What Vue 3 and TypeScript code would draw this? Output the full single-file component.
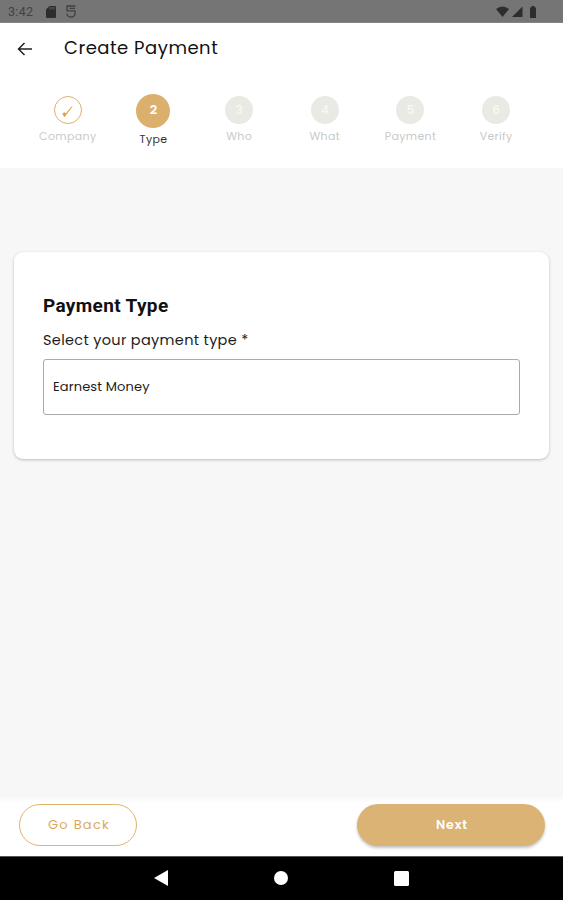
<script setup lang="ts">
interface Step {
  label: string
  mark: string
  state: 'done' | 'active' | 'todo'
}

const steps: Step[] = [
  { label: 'Company', mark: '✓', state: 'done' },
  { label: 'Type', mark: '2', state: 'active' },
  { label: 'Who', mark: '3', state: 'todo' },
  { label: 'What', mark: '4', state: 'todo' },
  { label: 'Payment', mark: '5', state: 'todo' },
  { label: 'Verify', mark: '6', state: 'todo' },
]
</script>

<template>
  <div class="screen">
    <div class="status">
      <span class="clock">3:42</span>
      <svg class="sd" width="10" height="12" viewBox="0 0 10 12"><path d="M3.5 0H9a1 1 0 0 1 1 1v10a1 1 0 0 1-1 1H1a1 1 0 0 1-1-1V3.5z" fill="#2d2d2d" /><path d="M4 1v2.500M6 1v2.500M8 1v2.500" stroke="#666" stroke-width=".9" /></svg>
      <svg class="app-icon" width="10" height="13" viewBox="0 0 10 13" fill="none" stroke="#404040" stroke-width="1.3"><path d="M9.500 1H1V5.800H9V8.500Q9 12 5 12Q1 12 1 8.500M3.500 3.400H9" /></svg>
      <svg class="radios" width="42" height="12" viewBox="0 0 42 12" fill="#2d2d2d">
        <path d="M0 3Q6.500-2 13 3L6.500 11z" />
        <path d="M26.500.5V11H16z" />
        <path d="M34 1.500h1.500V0h3v1.500h1.500V12h-6V1.500z" />
      </svg>
    </div>

    <header class="app-bar">
      <svg class="back" width="16" height="14" viewBox="0 0 16 14" fill="none" stroke="#222" stroke-width="1.5"><path d="M15 7H1.800M7.500 1L1.500 7l6 6" /></svg>
      <h1>Create Payment</h1>
    </header>

    <nav class="steps">
      <div v-for="step in steps" :key="step.label" class="step" :class="step.state">
        <span class="dot">
          <svg v-if="step.state === 'done'" width="11" height="13" viewBox="0 0 11 13"><path d="M.8 8.600L2.800 7.800L4 8.800L10 1.600L2.400 11.800z" fill="#d9a04e" stroke="#d9a04e" stroke-width=".8" /></svg>
          <template v-else>{{ step.mark }}</template>
        </span>
        <span class="label">{{ step.label }}</span>
      </div>
    </nav>

    <main class="content">
      <section class="card">
        <h2>Payment Type</h2>
        <p class="prompt">Select your payment type *</p>
        <div class="field"><span>Earnest Money</span></div>
      </section>
    </main>

    <footer class="actions">
      <button class="btn outline">Go Back</button>
      <button class="btn filled">Next</button>
    </footer>

    <div class="system-nav">
      <svg width="14" height="16" viewBox="0 0 14 16"><path d="M14 0v16L0 8z" fill="#fff" /></svg>
      <svg width="14" height="14" viewBox="0 0 14 14"><circle cx="7" cy="7" r="7" fill="#fff" /></svg>
      <svg width="15" height="15" viewBox="0 0 15 15"><rect width="15" height="15" rx="1.500" fill="#fff" /></svg>
    </div>
  </div>
</template>

<style>
body {
  margin: 0;
}
</style>

<style scoped>
.screen {
  width: 563px;
  height: 900px;
  display: flex;
  flex-direction: column;
  overflow: hidden;
  background: #fff;
  font-family: Poppins, Inter, sans-serif;
  color: #1c1c1c;
}
.status {
  height: 23px;
  flex: none;
  box-sizing: border-box;
  display: flex;
  align-items: center;
  padding: 1px 25px 0 8px;
  background: #757575;
  border-bottom: 1px solid #858585;
}
.clock {
  width: 38px;
  font: 12.5px Roboto, sans-serif;
  letter-spacing: 0.3px;
  color: #424242;
}
.app-icon {
  margin-left: 10px;
}
.radios {
  margin-left: auto;
}
.app-bar {
  height: 49px;
  flex: none;
  display: flex;
  align-items: center;
  padding-left: 17px;
  box-sizing: border-box;
}
.back {
  margin-top: 3px;
}
h1 {
  margin: 0 0 0 31px;
  font-size: 18px;
  font-weight: 400;
  letter-spacing: 0.52px;
  color: #111;
}
.steps {
  height: 96px;
  flex: none;
  box-sizing: border-box;
  display: grid;
  grid-template-columns: repeat(6, 1fr);
  padding: 22px 24px 0 25px;
}
.step {
  display: flex;
  flex-direction: column;
  align-items: center;
}
.dot {
  width: 28px;
  height: 28px;
  margin-top: 2px;
  box-sizing: border-box;
  display: flex;
  align-items: center;
  justify-content: center;
  border-radius: 50%;
  background: #eaeae4;
  color: #f8f8f2;
  font-size: 12px;
  font-weight: 500;
}
.done .dot {
  padding-top: 2px;
  background: #fff;
  border: 1.5px solid #dfb06c;
}
.active .dot {
  width: 34px;
  height: 34px;
  margin-top: 0;
  padding-bottom: 2px;
  background: #dbb06d;
  color: #fff;
  font-size: 13px;
  font-weight: 600;
}
.label {
  margin-top: 4px;
  font-size: 11px;
  line-height: 16px;
  letter-spacing: 0.35px;
  color: #c9c9c9;
}
.active .label {
  margin-top: 3px;
  color: #333;
}
.content {
  height: 629px;
  flex: none;
  box-sizing: border-box;
  padding: 84px 14px 0;
  background: #f7f7f7;
}
.card {
  height: 207px;
  box-sizing: border-box;
  padding: 42px 29px 0;
  border-radius: 9px;
  background: #fff;
  box-shadow: 0 1px 3px rgba(0, 0, 0, 0.24);
}
h2 {
  margin: 0;
  font: 700 19px/24px Roboto, sans-serif;
  letter-spacing: 0.35px;
  color: #111;
}
.prompt {
  margin: 12px 0 9px;
  font-size: 14.5px;
  line-height: 20px;
  letter-spacing: 0.32px;
}
.field {
  height: 56px;
  box-sizing: border-box;
  display: flex;
  align-items: center;
  padding: 0 9px 1px;
  border: 1px solid #aaa;
  border-radius: 3px;
  font-size: 13px;
  letter-spacing: 0.13px;
}
.actions {
  height: 59px;
  flex: none;
  box-sizing: border-box;
  display: flex;
  justify-content: space-between;
  padding: 7px 18px 0 19px;
  background: linear-gradient(#f9f9f9, #fff 6px);
}
.btn {
  height: 42px;
  box-sizing: border-box;
  padding: 0 0 1px;
  border-radius: 21px;
  font-family: inherit;
  font-size: 13px;
  letter-spacing: 1.25px;
}
.outline {
  width: 118px;
  padding-left: 2px;
  border: 1px solid #e0b46f;
  background: #fff;
  color: #dba95b;
  font-weight: 400;
}
.filled {
  width: 188px;
  padding-left: 2px;
  border: 0;
  background: #dbb374;
  color: #fff;
  font-size: 12.5px;
  font-weight: 600;
  letter-spacing: 0.9px;
  box-shadow: 0 2px 3px rgba(0, 0, 0, 0.24);
}
.system-nav {
  height: 44px;
  flex: none;
  box-sizing: border-box;
  display: flex;
  align-items: center;
  justify-content: space-between;
  padding: 0 154px 1px;
  border-top: 1px solid #555;
  background: #000;
}
</style>
